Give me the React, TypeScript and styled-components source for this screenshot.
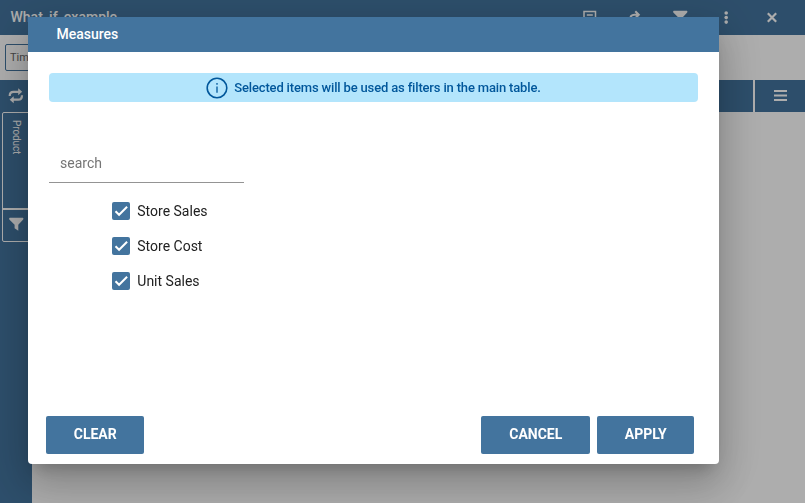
import React, { useState } from 'react';
import styled, { createGlobalStyle } from 'styled-components';

const BLUE = '#43749e';

const GlobalStyle = createGlobalStyle`
  * { box-sizing: border-box; }
  html, body, #root { height: 100%; margin: 0; }
  body { font-family: Roboto, "Liberation Sans", sans-serif; overflow: hidden; background: #fff; }
  button { font-family: inherit; }
`;

const Page = styled.div`
  height: 503px;
  display: flex;
  flex-direction: column;
  background: #fff;
`;

const TopBar = styled.header`
  height: 35px;
  flex: none;
  display: flex;
  align-items: center;
  padding: 0 24px 1px 10.500px;
  background: ${BLUE};
  color: #fff;
`;

const Title = styled.h1`
  flex: 1;
  margin: 0;
  font-size: 14px;
  line-height: 20px;
  font-weight: 500;
`;

const TopActions = styled.div`
  display: flex;
  align-items: center;
  gap: 28px;
`;

const Icon = styled.svg<{ $size?: number }>`
  display: block;
  flex: none;
  width: ${({ $size = 18 }) => $size}px;
  height: ${({ $size = 18 }) => $size}px;
`;

const FilterBar = styled.div`
  height: 45px;
  flex: none;
  padding: 9px 5px;
`;

const FilterChip = styled.div`
  width: 92px;
  height: 27px;
  padding-left: 4px;
  border: 1px solid ${BLUE};
  border-radius: 2px;
  font-size: 11px;
  line-height: 25px;
  color: #666;
`;

const AxisBar = styled.div`
  height: 32px;
  flex: none;
  display: flex;
  gap: 2px;
  color: #fff;
`;

const AxisMain = styled.div`
  flex: 1;
  display: flex;
  align-items: center;
  padding-left: 7px;
  background: ${BLUE};
`;

const AxisMenu = styled.div`
  width: 50px;
  display: flex;
  align-items: center;
  justify-content: center;
  background: ${BLUE};
`;

const SideBar = styled.aside`
  width: 32px;
  flex: 1;
  padding-left: 2px;
  background: ${BLUE};
  color: #fff;
`;

const AxisCard = styled.div`
  width: 28px;
  height: 130px;
  border: 1px solid #fff;
  border-radius: 2px;
`;

const AxisLabel = styled.div`
  width: 100%;
  height: 97px;
  padding: 7px 7px 0 0;
  border-bottom: 2px solid #fff;
  writing-mode: vertical-rl;
  font-size: 10px;
  line-height: 12px;
  letter-spacing: -0.1px;
`;

const AxisFilter = styled.div`
  display: flex;
  padding: 5px 0 0 4px;
`;

const Backdrop = styled.div`
  position: fixed;
  inset: 0;
  padding: 17px 0 0 28px;
  background: rgba(0, 0, 0, 0.32);
`;

const Dialog = styled.section`
  width: 691px;
  height: 447px;
  display: flex;
  flex-direction: column;
  background: #fff;
  border-radius: 0 0 4px 4px;
  box-shadow: 0 11px 15px -7px rgba(0, 0, 0, 0.2), 0 24px 38px 3px rgba(0, 0, 0, 0.14),
    0 9px 46px 8px rgba(0, 0, 0, 0.12);
`;

const DialogHeader = styled.h2`
  flex: none;
  height: 35px;
  margin: 0;
  padding-left: 28.500px;
  background: ${BLUE};
  color: #fff;
  font-size: 14px;
  line-height: 35px;
  font-weight: 500;
`;

const DialogBody = styled.div`
  flex: 1;
  padding: 21px 21px 0;
`;

const InfoBanner = styled.div`
  height: 29px;
  display: flex;
  align-items: center;
  justify-content: center;
  gap: 6px;
  border-radius: 4px;
  background: #b3e5fc;
  color: #01579b;
  font-size: 13px;
  font-weight: 500;
  letter-spacing: -0.16px;
`;

const SearchInput = styled.input`
  display: block;
  width: 195px;
  height: 39px;
  margin-top: 42px;
  padding: 0 11px;
  border: 0;
  border-bottom: 1px solid #949494;
  outline: 0;
  font: 400 14px/20px Roboto, sans-serif;
  color: #212121;
  &::placeholder { color: #757575; opacity: 1; }
`;

const OptionList = styled.div`
  display: flex;
  flex-direction: column;
  gap: 17px;
  padding: 19px 0 0 63px;
`;

const Option = styled.label`
  display: flex;
  align-items: center;
  align-self: flex-start;
  gap: 7.300px;
  height: 18px;
  font-size: 14px;
  color: #212121;
`;

const CheckBox = styled.button<{ $checked: boolean }>`
  width: 18px;
  height: 18px;
  padding: 0;
  border: ${({ $checked }) => ($checked ? '0' : '2px solid #757575')};
  border-radius: 2px;
  background: ${({ $checked }) => ($checked ? BLUE : '#fff')};
`;

const DialogFooter = styled.footer`
  display: flex;
  gap: 7px;
  padding: 0 25px 10px 18px;
`;

const Button = styled.button<{ $width: number; $first?: boolean }>`
  width: ${({ $width }) => $width}px;
  height: 38px;
  margin-right: ${({ $first }) => ($first ? 'auto' : '0')};
  padding: 0 0 2px 0.500px;
  border: 0;
  border-radius: 2px;
  background: ${BLUE};
  color: #fff;
  font-size: 14px;
  font-weight: 700;
`;

const FunnelIcon = () => (
  <Icon viewBox="0 0 18 18" fill="currentColor">
    <path d="M2.700 2.800h13.200q1 .8.300 1.700L11.300 9.800v6l-3.700-2.600V9.800L2.300 4.500Q1.700 3.600 2.700 2.800z" />
  </Icon>
);

const measures = ['Store Sales', 'Store Cost', 'Unit Sales'];

export default function App() {
  const [selected, setSelected] = useState<string[]>(measures);
  const toggle = (name: string) =>
    setSelected((s) => (s.includes(name) ? s.filter((n) => n !== name) : [...s, name]));

  return (
    <>
      <GlobalStyle />
      <Page>
        <TopBar>
          <Title>What_if_example</Title>
          <TopActions>
            <Icon viewBox="0 0 18 18" fill="none" stroke="currentColor" strokeWidth="1.500">
              <path d="M5 3.500h11.500v12H5zM7.800 7h6M7.800 10h6M7.800 12.500h4" />
            </Icon>
            <Icon viewBox="0 0 18 18" fill="none" stroke="currentColor" strokeWidth="2">
              <path d="M5 15V12Q5 6.700 9.500 6.700h4.500M10.300 3.200 13.800 6.700l-3.500 3.500" />
            </Icon>
            <FunnelIcon />
            <Icon viewBox="0 0 18 18" fill="currentColor">
              <circle cx="9.200" cy="5" r="1.800" />
              <circle cx="9.200" cy="9.600" r="1.800" />
              <circle cx="9.200" cy="14.100" r="1.800" />
            </Icon>
            <Icon viewBox="0 0 18 18" fill="none" stroke="currentColor" strokeWidth="2.200">
              <path d="m4.800 5.300 8.400 8.400m0-8.400-8.400 8.400" />
            </Icon>
          </TopActions>
        </TopBar>
        <FilterBar>
          <FilterChip>Time</FilterChip>
        </FilterBar>
        <AxisBar>
          <AxisMain>
            <Icon viewBox="0 0 18 18" fill="none" stroke="currentColor" strokeWidth="2.200">
              <path d="M2.700 9Q2.700 4.800 6.500 4.800H12.500M15 8.200Q15 12.700 11.200 12.700H5.500" />
              <path d="m11.200 1.200 4 3.600-4 3.500zM6.700 9.200l-4 3.500 4 3.500z" fill="currentColor" stroke="none" />
            </Icon>
          </AxisMain>
          <AxisMenu>
            <Icon viewBox="0 0 18 18" fill="none" stroke="currentColor" strokeWidth="2">
              <path d="M3 4h13M3 8.500h13M3 13h13" />
            </Icon>
          </AxisMenu>
        </AxisBar>
        <SideBar>
          <AxisCard>
            <AxisLabel>Product</AxisLabel>
            <AxisFilter>
              <FunnelIcon />
            </AxisFilter>
          </AxisCard>
        </SideBar>
      </Page>
      <Backdrop>
        <Dialog role="dialog" aria-labelledby="measures-title">
          <DialogHeader id="measures-title">Measures</DialogHeader>
          <DialogBody>
            <InfoBanner>
              <Icon $size={22} viewBox="0 0 22 22" fill="none" stroke="currentColor">
                <circle cx="11" cy="11" r="9.800" strokeWidth="1.600" />
                <path d="M11 9.500v6.200M11 6v1.700" strokeWidth="1.300" />
              </Icon>
              <span>Selected items will be used as filters in the main table.</span>
            </InfoBanner>
            <SearchInput placeholder="search" />
            <OptionList>
              {measures.map((name) => {
                const checked = selected.includes(name);
                return (
                  <Option key={name}>
                    <CheckBox
                      type="button"
                      role="checkbox"
                      aria-checked={checked}
                      $checked={checked}
                      onClick={() => toggle(name)}
                    >
                      {checked && (
                        <Icon viewBox="0 0 18 18" fill="none" stroke="#fff" strokeWidth="2">
                          <path d="m3.500 9.200 3.600 3.600 8-8" />
                        </Icon>
                      )}
                    </CheckBox>
                    {name}
                  </Option>
                );
              })}
            </OptionList>
          </DialogBody>
          <DialogFooter>
            <Button $width={98} $first onClick={() => setSelected([])}>CLEAR</Button>
            <Button $width={109}>CANCEL</Button>
            <Button $width={97}>APPLY</Button>
          </DialogFooter>
        </Dialog>
      </Backdrop>
    </>
  );
}
